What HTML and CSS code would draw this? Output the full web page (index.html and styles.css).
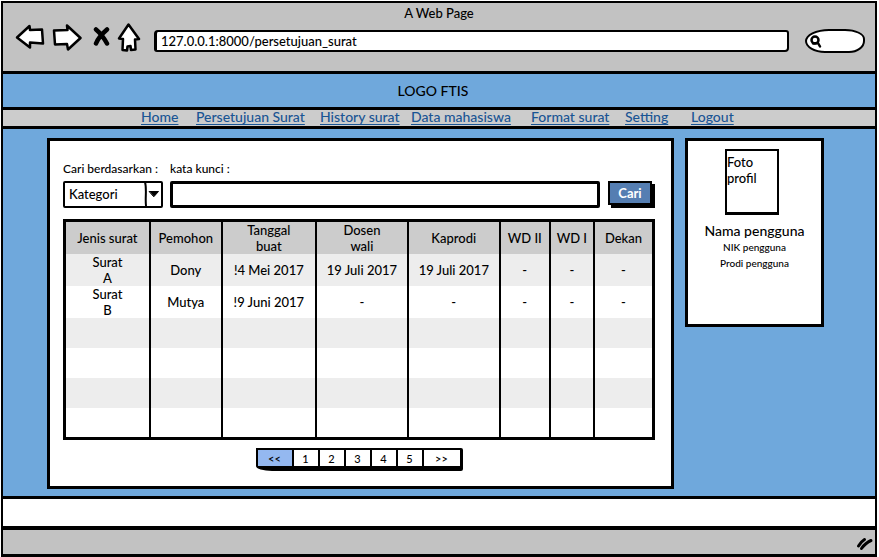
FILE: index.html
```html
<!DOCTYPE html>
<html lang="id">
<head>
<meta charset="utf-8">
<meta name="viewport" content="width=device-width, initial-scale=1">
<title>A Web Page</title>
<link rel="stylesheet" href="styles.css">
</head>
<body>
<div class="window">
  <header class="chrome">
    <div class="chrome-title">A Web Page</div>
    <div class="toolbar">
      <div class="controls">
        <button type="button" class="icon-button" aria-label="Back"><svg width="30" height="26" viewBox="0 0 30 26"><path d="M2 13.500 14.500 2l.5 4 12-.5 1 14-13-1v5z"/></svg></button>
        <button type="button" class="icon-button" aria-label="Forward"><svg width="30" height="27" viewBox="0 0 30 27"><path d="M2 6.500 15.500 6l-.5-4.500L28.500 14 16 25.500l-1-5.500-12 .5z"/></svg></button>
        <button type="button" class="icon-button stop" aria-label="Stop"><svg width="17" height="20" viewBox="0 0 17 20"><path class="cross" d="M3 2.500C6 5 11 11 14 16.500M14 2.500C10 6 5 11 3 16.500"/></svg></button>
        <button type="button" class="icon-button" aria-label="Home"><svg width="24" height="29" viewBox="0 0 24 29"><path d="M11.500 1.500 22 16l-4 .5.5 10-4.500.5-.500-4-3 .5-.5 4-4.500-.5.500-11-4-.5z"/></svg></button>
      </div>
      <input class="address" type="text" aria-label="Address" value="127.0.0.1:8000/persetujuan_surat">
      <label class="browser-search">
        <svg width="12" height="13" viewBox="0 0 12 13"><circle cx="5" cy="5" r="3.500"/><path d="M3 8.500 8 8l2 3.500"/></svg>
        <input type="text" aria-label="Search">
      </label>
    </div>
  </header>

  <div class="brand">LOGO FTIS</div>

  <nav class="menu" aria-label="Menu">
    <a href="#">Home</a>
    <a href="#">Persetujuan Surat</a>
    <a href="#">History surat</a>
    <a href="#">Data mahasiswa</a>
    <a href="#">Format surat</a>
    <a href="#">Setting</a>
    <a href="#">Logout</a>
  </nav>

  <div class="content">
    <main class="panel">
      <form class="filter">
        <label for="category">Cari berdasarkan :</label>
        <label class="keyword-label" for="keyword">kata kunci :</label>
        <div class="select">
          <select id="category"><option>Kategori</option></select>
          <svg width="20" height="26" viewBox="0 0 20 26"><path class="divider" d="M2 1c2 7 0 16 1 24"/><path d="M6.500 10.500h9L11 15.500z"/></svg>
        </div>
        <input class="keyword" id="keyword" type="text">
        <button class="submit" type="submit">Cari</button>
      </form>

      <table class="letters">
        <colgroup>
          <col class="type"><col class="applicant"><col class="created"><col class="approval"><col class="approval"><col class="wd2"><col class="wd1"><col>
        </colgroup>
        <thead>
          <tr><th>Jenis surat</th><th>Pemohon</th><th>Tanggal<br>buat</th><th>Dosen<br>wali</th><th>Kaprodi</th><th>WD II</th><th>WD I</th><th>Dekan</th></tr>
        </thead>
        <tbody>
          <tr class="filled"><td>Surat<br>A</td><td>Dony</td><td>!4 Mei 2017</td><td>19 Juli 2017</td><td>19 Juli 2017</td><td>-</td><td>-</td><td>-</td></tr>
          <tr class="filled"><td>Surat<br>B</td><td>Mutya</td><td>!9 Juni 2017</td><td>-</td><td>-</td><td>-</td><td>-</td><td>-</td></tr>
          <tr><td></td><td></td><td></td><td></td><td></td><td></td><td></td><td></td></tr>
          <tr><td></td><td></td><td></td><td></td><td></td><td></td><td></td><td></td></tr>
          <tr><td></td><td></td><td></td><td></td><td></td><td></td><td></td><td></td></tr>
          <tr><td></td><td></td><td></td><td></td><td></td><td></td><td></td><td></td></tr>
        </tbody>
      </table>

      <nav class="pager" aria-label="Halaman">
        <button type="button" class="wide current">&lt;&lt;</button>
        <button type="button">1</button>
        <button type="button">2</button>
        <button type="button">3</button>
        <button type="button">4</button>
        <button type="button">5</button>
        <button type="button" class="wide">&gt;&gt;</button>
      </nav>
    </main>

    <aside class="panel profile">
      <div class="photo">Foto profil</div>
      <div class="name">Nama pengguna</div>
      <div class="detail">NIK pengguna</div>
      <div class="detail">Prodi pengguna</div>
    </aside>
  </div>

  <div class="footer"></div>
  <div class="status"><svg width="17" height="14" viewBox="0 0 17 14"><path d="M2.500 9C4 6.500 6 4 8.500 2.500M5.500 11.500C8 8 11.500 5 15 3.500"/></svg></div>
</div>
</body>
</html>
```

FILE: styles.css
```css
* {
  box-sizing: border-box;
}

body {
  margin: 0;
  background: #fff;
  color: #000;
  font: 500 13px/16px Lato, "Open Sans", sans-serif;
}

input,
select,
button {
  margin: 0;
  padding: 0;
  border: 0;
  background: none;
  color: inherit;
  font: inherit;
}

svg {
  display: block;
  fill: none;
  stroke: #000;
  stroke-width: 2.5;
  stroke-linecap: round;
  stroke-linejoin: round;
}

.window {
  display: flex;
  flex-direction: column;
  min-height: calc(100vh - 2px);
  margin: 1px 2px 1px 1px;
  border: 2px solid #000;
  border-bottom-width: 3px;
  background: #6fa8dc;
}

/* Browser chrome */
.chrome {
  height: 71px;
  padding-top: 2px;
  border-bottom: 3px solid #000;
  background: #c2c2c2;
}

.chrome-title {
  text-align: center;
}

.toolbar {
  display: flex;
  align-items: center;
  gap: 16px;
  padding: 0 10px 0 12px;
}

.controls {
  display: flex;
  align-items: center;
  gap: 7px;
  width: 123px;
}

.icon-button path {
  fill: #fff;
}

.icon-button.stop {
  padding-left: 4px;
}

.icon-button .cross {
  fill: none;
  stroke-width: 4.500;
}

.address {
  flex: 1;
  min-width: 0;
  height: 22px;
  margin-top: 8px;
  padding-left: 4px;
  border: 2px solid #000;
  border-left-width: 3px;
  border-radius: 4px 3px 4px 3px;
  background: #fff;
}

.browser-search {
  display: flex;
  align-items: center;
  width: 60px;
  height: 24px;
  margin-top: 8px;
  padding-left: 3px;
  border: 2px solid #000;
  border-radius: 24px 20px 16px 20px / 12px 10px 12px 12px;
  background: #fff;
}

.browser-search input {
  width: 36px;
}

/* Site header */
.brand {
  height: 36px;
  padding: 9px 12px 0 0;
  border-bottom: 3px solid #000;
  font-size: 14px;
  text-align: center;
}

.menu {
  display: grid;
  grid-template-columns: 55px 124px 91px 120px 94px 66px 41px;
  justify-content: center;
  height: 19px;
  padding-right: 5px;
  border-bottom: 3px solid #000;
  background: #ccc;
  white-space: nowrap;
}

.menu a {
  color: #1a5594;
  font-size: 14px;
  line-height: 14px;
  text-decoration: underline;
  text-decoration-skip-ink: none;
  text-decoration-thickness: 1px;
  text-underline-offset: 2px;
}

/* Page */
.content {
  display: grid;
  flex: 1;
  grid-template-columns: 1fr 139px;
  align-items: start;
  gap: 11px;
  padding: 9px 51px 7px 44px;
}

.panel {
  border: 3px solid #000;
  background: #fff;
}

main.panel {
  padding: 20px 16px 15px 13px;
}

.filter {
  display: grid;
  grid-template-columns: 100px 1fr 48px;
  gap: 4px 7px;
  font-size: 12px;
}

.keyword-label {
  grid-column: 2 / 4;
}

.select {
  position: relative;
  height: 27px;
  border: 2px solid #000;
  border-radius: 2px;
  font-size: 13px;
}

.select select {
  width: 100%;
  height: 100%;
  padding: 0 0 2px 4px;
  appearance: none;
}

.select svg {
  position: absolute;
  top: -2px;
  right: -2px;
  pointer-events: none;
}

.select path {
  fill: #000;
  stroke-width: 1;
}

.select .divider {
  fill: none;
  stroke-width: 2;
}

.keyword {
  min-width: 0;
  height: 27px;
  border: 3px solid #000;
  border-radius: 2px;
}

.submit {
  height: 24px;
  margin: 0 3px 3px 1px;
  border: 2px solid #000;
  background: #557eb2;
  box-shadow: 3px 3px #000;
  color: #fff;
  font-size: 13px;
  font-weight: 700;
}

.letters {
  width: 100%;
  margin-top: 11px;
  border: 3px solid #000;
  border-collapse: collapse;
  table-layout: fixed;
  text-align: center;
}

.type { width: 14.5%; }
.applicant { width: 12.200%; }
.created { width: 16%; }
.approval { width: 15.600%; }
.wd2 { width: 8.500%; }
.wd1 { width: 7.500%; }

.letters tr {
  height: 30px;
}

.letters thead tr,
.letters .filled {
  height: 32px;
}

.letters th,
.letters td {
  padding: 0;
  border-right: 2px solid #000;
  border-left: 2px solid #000;
  font-weight: inherit;
}

.letters thead {
  background: #ccc;
}

.letters tbody tr:nth-child(odd) {
  background: #ededed;
}

.pager {
  display: flex;
  width: max-content;
  margin: 8px auto 0;
  border: 2px solid #000;
  border-right-width: 3px;
  border-bottom-width: 5px;
  border-radius: 0 2px 2px 16px / 0 2px 2px 5px;
  font-size: 11px;
}

.pager button {
  width: 26px;
  height: 16px;
  padding-top: 3px;
  border-right: 2px solid #000;
  line-height: 12px;
}

.pager button:last-child {
  border-right: 0;
}

.pager .wide {
  width: 36px;
}

.pager .current {
  background: #94b8f0;
}

/* Profile card */
.profile {
  min-height: 189px;
  padding: 8px 4px;
  text-align: center;
}

.photo {
  width: 54px;
  height: 66px;
  margin: 0 0 0 33px;
  padding: 3px 0;
  border: 2px solid #000;
  border-bottom-width: 3px;
  text-align: left;
}

.name {
  margin-top: 8px;
  font-size: 14px;
}

.detail {
  font-size: 10px;
}

.footer {
  height: 34px;
  border: solid #000;
  border-width: 3px 0 4px;
  background: #fff;
}

.status {
  display: flex;
  align-items: center;
  justify-content: flex-end;
  height: 24px;
  padding: 4px 2px 0 0;
  background: #c2c2c2;
}

.status path {
  stroke-width: 3;
}
```
